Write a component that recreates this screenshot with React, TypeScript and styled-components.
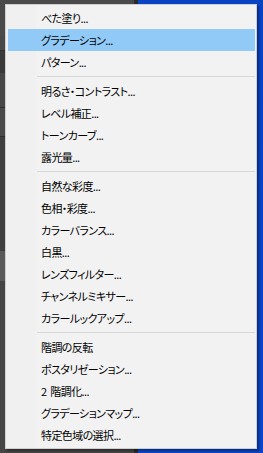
import React from 'react'
import styled, { createGlobalStyle } from 'styled-components'

const GlobalStyle = createGlobalStyle`
  html, body {
    margin: 0;
    padding: 0;
    width: 263px;
    height: 453px;
    overflow: hidden;
  }
`

const Screen = styled.div`
  position: relative;
  width: 263px;
  height: 453px;
  display: grid;
  grid-template-columns: 134px 4px 1fr;
  font-family: 'Noto Sans CJK JP', 'Liberation Sans', sans-serif;
`

const LeftPanel = styled.div`
  display: flex;
  flex-direction: column;
  background: #444444;
`

const PanelBand = styled.div<{ $h: number; $bg: string; $line?: boolean }>`
  height: ${(p) => p.$h}px;
  flex-shrink: 0;
  background: ${(p) => p.$bg};
  border-bottom: ${(p) => (p.$line ? '1px solid #2f2f2f' : 'none')};
`

const PanelFill = styled.div`
  flex: 1;
  background: #454545;
`

const Divider = styled.div`
  background: #2b2b2b;
`

const Desktop = styled.div`
  background: linear-gradient(180deg, #0a42c4 0%, #0b45c8 100%);
`

const Menu = styled.div`
  position: absolute;
  left: 5px;
  top: 4px;
  width: 247px;
  padding: 2px 1px 2px 2px;
  background: linear-gradient(90deg, #f0f0f0 0 30px, #f2f2f2 30px);
  border: 1px solid #cfcfcf;
  box-shadow: 2px 2px 2px rgba(0, 0, 0, 0.35);
  display: flex;
  flex-direction: column;
`

const Item = styled.div<{ $active?: boolean }>`
  height: 22px;
  display: flex;
  align-items: center;
  padding-left: 33px;
  font-size: 11px;
  color: #000000;
  font-feature-settings: 'palt';
  letter-spacing: -0.6px;
  word-spacing: 2px;
  background: ${(p) => (p.$active ? '#91c9f7' : 'transparent')};
  white-space: pre;
`

const Separator = styled.div`
  height: 7px;
  display: flex;
  align-items: center;
  padding-left: 29px;

  &::after {
    content: '';
    flex: 1;
    height: 1px;
    background: #d7d7d7;
  }
`

type Entry = { label: string; active?: boolean } | 'sep'

const entries: Entry[] = [
  { label: 'べた塗り...' },
  { label: 'グラデーション...', active: true },
  { label: 'パターン...' },
  'sep',
  { label: '明るさ・コントラスト...' },
  { label: 'レベル補正...' },
  { label: 'トーンカーブ...' },
  { label: '露光量...' },
  'sep',
  { label: '自然な彩度...' },
  { label: '色相・彩度...' },
  { label: 'カラーバランス...' },
  { label: '白黒...' },
  { label: 'レンズフィルター...' },
  { label: 'チャンネルミキサー...' },
  { label: 'カラールックアップ...' },
  'sep',
  { label: '階調の反転' },
  { label: 'ポスタリゼーション...' },
  { label: '2 階調化...' },
  { label: 'グラデーションマップ...' },
  { label: '特定色域の選択...' },
]

export default function App() {
  return (
    <>
      <GlobalStyle />
      <Screen>
        <LeftPanel>
          <PanelBand $h={36} $bg="#4a4a4a" />
          <PanelBand $h={14} $bg="#484848" $line />
          <PanelBand $h={22} $bg="#3a3a3a" />
          <PanelBand $h={34} $bg="#474747" $line />
          <PanelBand $h={28} $bg="#4a4a4a" $line />
          <PanelBand $h={114} $bg="#3f3f3f" />
          <PanelBand $h={30} $bg="#5a5a5a" />
          <PanelFill />
        </LeftPanel>
        <Divider />
        <Desktop />
        <Menu>
          {entries.map((e, i) =>
            e === 'sep' ? (
              <Separator key={i} />
            ) : (
              <Item key={i} $active={e.active}>
                {e.label}
              </Item>
            ),
          )}
        </Menu>
      </Screen>
    </>
  )
}
